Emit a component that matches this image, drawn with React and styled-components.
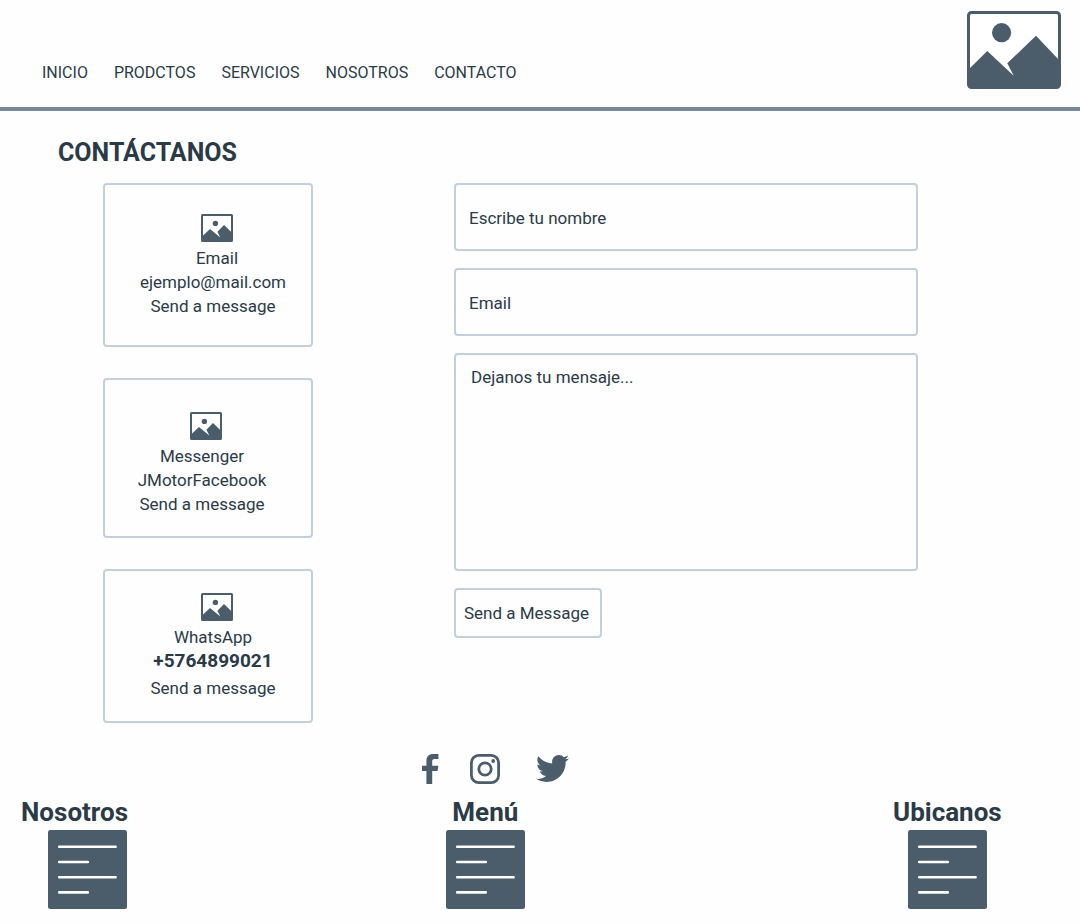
import React from "react";
import styled, { createGlobalStyle } from "styled-components";
import { FaTwitter } from "react-icons/fa";

const ink = "#2a3a47";
const slate = "#4b5d6b";
const line = "#c3cfdb";

const GlobalStyle = createGlobalStyle`
  *, *::before, *::after { box-sizing: border-box; }
  body {
    margin: 0;
    background: #fefefe;
    color: ${ink};
    font: 400 17px/24px Roboto, "Liberation Sans", sans-serif;
  }
  h1, h2, h3, p { margin: 0; }
  svg { display: block; }
  a { color: inherit; text-decoration: none; }
`;

const Header = styled.header`
  display: flex;
  justify-content: space-between;
  align-items: flex-end;
  padding: 11px 19px 18px 42px;
  border-bottom: 4px solid #778899;
`;

const Nav = styled.nav`
  display: flex;
  gap: 26px;
  padding-bottom: 4px;
  font-size: 16px;
`;

const Main = styled.main`
  padding: 26px 15% 0 103px;
`;

const Title = styled.h1`
  margin: 0 0 14px -45px;
  font-size: 25px;
  line-height: 32px;
  font-weight: 700;
`;

const Columns = styled.div`
  display: grid;
  grid-template-columns: 210px minmax(0, 1fr);
  gap: 141px;
  align-items: start;
`;

const CardList = styled.section`
  display: flex;
  flex-direction: column;
  gap: 31px;
`;

const Card = styled.article`
  display: flex;
  flex-direction: column;
  align-items: center;
  padding: ${(p) => p.$pad};
  border: 2px solid ${line};
  border-radius: 4px;
  text-align: center;
`;

const CardIcon = styled.div`
  padding: 0 0 4px 8px;
`;

const CardName = styled.h3`
  padding-left: ${(p) => (p.$indent ? "8px" : "0")};
  font-size: 17px;
  font-weight: 400;
`;

const CardDetail = styled.p`
  font-size: ${(p) => (p.$strong ? "19px" : "17px")};
  font-weight: ${(p) => (p.$strong ? 700 : 400)};
  padding-bottom: ${(p) => (p.$strong ? "3px" : "0")};
`;

const Form = styled.form`
  display: flex;
  flex-direction: column;
  align-items: flex-start;
  gap: 17px;
`;

const fieldStyle = `
  display: block;
  width: 100%;
  border: 2px solid ${line};
  border-radius: 4px;
  background: transparent;
  color: ${ink};
  font: inherit;
  &::placeholder { color: ${ink}; opacity: 1; }
`;

const Input = styled.input`
  ${fieldStyle}
  height: 68px;
  padding: 2px 13px 0;
`;

const TextArea = styled.textarea`
  ${fieldStyle}
  height: 218px;
  padding: 10px 15px;
  resize: none;
`;

const SendButton = styled.button`
  width: 148px;
  padding: 11px 8px;
  border: 2px solid ${line};
  border-radius: 4px;
  background: transparent;
  color: ${ink};
  font: inherit;
  text-align: left;
  white-space: nowrap;
`;

const Footer = styled.footer`
  padding: 29px 78px 15px 21px;
`;

const Social = styled.div`
  display: flex;
  justify-content: center;
  align-items: center;
  gap: 31px;
  padding-right: 32px;
  color: ${slate};
`;

const SocialLink = styled.a`
  padding-left: ${(p) => (p.$spaced ? "5px" : "0")};
`;

const FooterColumns = styled.div`
  display: grid;
  grid-template-columns: 19fr 20fr 109px;
  margin-top: 11px;
`;

const FooterColumn = styled.section`
  justify-self: start;
  display: flex;
  flex-direction: column;
  align-items: center;
`;

const FooterTitle = styled.h2`
  margin-bottom: 2px;
  font-size: 26px;
  line-height: 32px;
  font-weight: 700;
`;

const ListWrap = styled.div`
  padding-left: ${(p) => p.$shift || "0"};
`;

function Logo() {
  return (
    <svg width="94" height="78" viewBox="0 0 94 78" role="img" aria-label="Logo">
      <rect x="1.5" y="1.5" width="91" height="75" rx="3" fill="#fff" stroke={slate} strokeWidth="3" />
      <circle cx="34.6" cy="21.7" r="9.6" fill={slate} />
      <path d="M2 58 20.3 40 46.7 64.7 40.3 52.3 69 24.7 92 49V74Q92 76.5 89 76.5H5Q2 76.5 2 74Z" fill={slate} />
    </svg>
  );
}

function PictureIcon() {
  return (
    <svg width="32" height="28" viewBox="0 0 32 28" aria-hidden="true">
      <rect x="1" y="1" width="30" height="26" rx="0.5" fill="#fff" stroke={slate} strokeWidth="2" />
      <circle cx="14.4" cy="9.4" r="2.7" fill={slate} />
      <path d="M1 22.5 9 15 19.3 23.6 16.4 17.8 23 11 31 18.8V27H1Z" fill={slate} />
    </svg>
  );
}

function ListIcon() {
  return (
    <svg width="79" height="79" viewBox="0 0 79 79" aria-hidden="true">
      <rect width="79" height="79" rx="2.5" fill={slate} />
      <path
        d="M11.2 16.7H67.6M11.2 32H39.8M11.2 47.2H67.6M11.2 62.4H39.8"
        stroke="#fff"
        strokeWidth="2.6"
        strokeLinecap="round"
      />
    </svg>
  );
}

function FacebookIcon() {
  return (
    <svg width="17" height="30" viewBox="0 0 17 30" aria-hidden="true">
      <path
        d="M4.4 30V17H0V11.8H4.4V7.2C4.4 2.4 7 0 11 0H16.4V5H12.6C10.6 5 10.2 6 10.2 7.5V11.8H16.4L15.5 17H10.2V30Z"
        fill="currentColor"
      />
    </svg>
  );
}

function InstagramIcon() {
  return (
    <svg width="30" height="30" viewBox="0 0 30 30" fill="none" aria-hidden="true">
      <rect x="1.4" y="1.4" width="27.2" height="27.2" rx="7.4" stroke="currentColor" strokeWidth="2.8" />
      <circle cx="15" cy="15" r="6.2" stroke="currentColor" strokeWidth="2.8" />
      <circle cx="23.2" cy="7" r="1.9" fill="currentColor" />
    </svg>
  );
}

const links = ["INICIO", "PRODCTOS", "SERVICIOS", "NOSOTROS", "CONTACTO"];

const contacts = [
  { name: "Email", detail: "ejemplo@mail.com", pad: "29px 0 27px 10px", indent: true },
  { name: "Messenger", detail: "JMotorFacebook", pad: "32px 12px 20px 0" },
  { name: "WhatsApp", detail: "+5764899021", pad: "22px 0 21px 10px", strong: true },
];

const sections = [
  { title: "Nosotros", shift: "25px" },
  { title: "Menú" },
  { title: "Ubicanos" },
];

export default function App() {
  return (
    <>
      <GlobalStyle />
      <Header>
        <Nav>
          {links.map((label) => (
            <a key={label} href="#">{label}</a>
          ))}
        </Nav>
        <Logo />
      </Header>
      <Main>
        <Title>CONTÁCTANOS</Title>
        <Columns>
          <CardList>
            {contacts.map((c) => (
              <Card key={c.name} $pad={c.pad}>
                <CardIcon><PictureIcon /></CardIcon>
                <CardName $indent={c.indent}>{c.name}</CardName>
                <CardDetail $strong={c.strong}>{c.detail}</CardDetail>
                <a href="#">Send a message</a>
              </Card>
            ))}
          </CardList>
          <Form onSubmit={(e) => e.preventDefault()}>
            <Input type="text" aria-label="Escribe tu nombre" placeholder="Escribe tu nombre" />
            <Input type="email" aria-label="Email" placeholder="Email" />
            <TextArea aria-label="Dejanos tu mensaje" placeholder="Dejanos tu mensaje..." />
            <SendButton type="submit">Send a Message</SendButton>
          </Form>
        </Columns>
      </Main>
      <Footer>
        <Social>
          <SocialLink href="#" aria-label="Facebook"><FacebookIcon /></SocialLink>
          <SocialLink href="#" aria-label="Instagram"><InstagramIcon /></SocialLink>
          <SocialLink href="#" aria-label="Twitter" $spaced><FaTwitter size={33} /></SocialLink>
        </Social>
        <FooterColumns>
          {sections.map((s) => (
            <FooterColumn key={s.title}>
              <FooterTitle>{s.title}</FooterTitle>
              <ListWrap $shift={s.shift}><ListIcon /></ListWrap>
            </FooterColumn>
          ))}
        </FooterColumns>
      </Footer>
    </>
  );
}
